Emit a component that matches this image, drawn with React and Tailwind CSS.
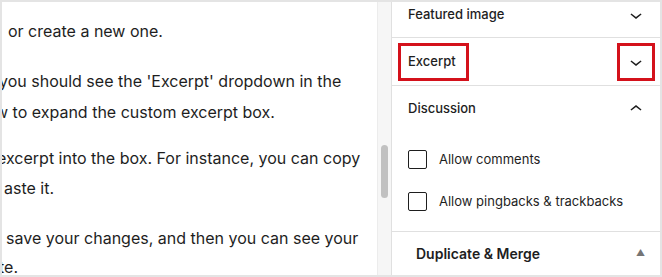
import React from "react";

function ChevronDown() {
  return (
    <svg width="24" height="24" viewBox="0 0 24 24" className="fill-[#1e1e1e]">
      <path d="M17.5 11.6L12 16l-5.5-4.4.9-1.2L12 14l4.6-3.6 1 1.2z" />
    </svg>
  );
}

function ChevronUp() {
  return (
    <svg width="24" height="24" viewBox="0 0 24 24" className="fill-[#1e1e1e]">
      <path d="M6.5 12.4L12 8l5.5 4.4-.9 1.2L12 10l-4.6 3.6-1-1.2z" />
    </svg>
  );
}

function Line({ text, className = "" }) {
  return (
    <div className={`h-[30px] leading-[30px] whitespace-nowrap ${className}`}>{text}</div>
  );
}

function PanelHeader({ title, icon, h = "h-[48px]" }) {
  return (
    <div className={`${h} flex items-center justify-between pl-4 pr-3`}>
      <span className="text-[13px] font-medium">{title}</span>
      {icon}
    </div>
  );
}

function CheckRow({ label }) {
  return (
    <label className="flex items-center gap-3 h-[19px]">
      <span className="w-[19px] h-[19px] rounded-[2px] border border-[#1e1e1e] bg-white flex-shrink-0" />
      <span className="text-[13px]">{label}</span>
    </label>
  );
}

export default function App() {
  return (
    <div className="w-[662px] h-[277px] overflow-hidden flex bg-white border-2 border-[#e4e4e4] text-[#1e1e1e] font-['Inter',sans-serif]">

      {/* editor text, cut off at the left edge */}
      <div className="w-[375px] flex-shrink-0 overflow-hidden pt-[14px] text-[16px]">
        <Line text="or create a new one." className="ml-[6px]" />
        <div className="mt-[20px]">
          <Line text="you should see the 'Excerpt' dropdown in the" className="ml-[-3px]" />
          <Line text="w to expand the custom excerpt box." className="ml-[-7px] mt-px" />
        </div>
        <div className="mt-[16px]">
          <Line text="excerpt into the box. For instance, you can copy" className="ml-[-5px]" />
          <Line text="aste it." className="ml-[2px]" />
        </div>
        <div className="mt-[20px]">
          <Line text="o save your changes, and then you can see your" className="ml-[-10px]" />
          <Line text="te." className="ml-[-3px] -mt-px" />
        </div>
      </div>

      {/* scrollbar */}
      <div className="w-[14px] flex-shrink-0 bg-[#f6f6f6] border-l border-[#ececec] pt-[143px] flex justify-center">
        <div className="w-[7px] h-[53px] rounded-full bg-[#c1c1c1]" />
      </div>

      {/* settings sidebar */}
      <div className="flex-1 border-l border-[#e0e0e0] -mt-[10px] flex flex-col">
        <div className="border-b border-[#e0e0e0]">
          <PanelHeader title="Featured image" icon={<ChevronDown />} h="h-[45px]" />
        </div>

        <div className="relative border-b border-[#e0e0e0]">
          <PanelHeader title="Excerpt" icon={<ChevronDown />} h="h-[47px]" />
          <div className="absolute left-[6px] top-[5px] w-[71px] h-[38px] border-[3px] border-[#d4111b]" />
          <div className="absolute left-[225px] top-[5px] w-[38px] h-[38px] border-[3px] border-[#d4111b]" />
        </div>

        <div className="border-b border-[#e0e0e0]">
          <PanelHeader title="Discussion" icon={<ChevronUp />} h="h-[46px]" />
          <div className="pl-4 pt-[18px] pb-[20px] flex flex-col gap-[23px]">
            <CheckRow label="Allow comments" />
            <CheckRow label="Allow pingbacks & trackbacks" />
          </div>
        </div>

        <div className="h-[42px] flex items-center justify-between pl-6 pr-[15px]">
          <span className="text-[14px] font-semibold">Duplicate &amp; Merge</span>
          <span className="text-[9px] text-[#757575]">▲</span>
        </div>
      </div>
    </div>
  );
}
